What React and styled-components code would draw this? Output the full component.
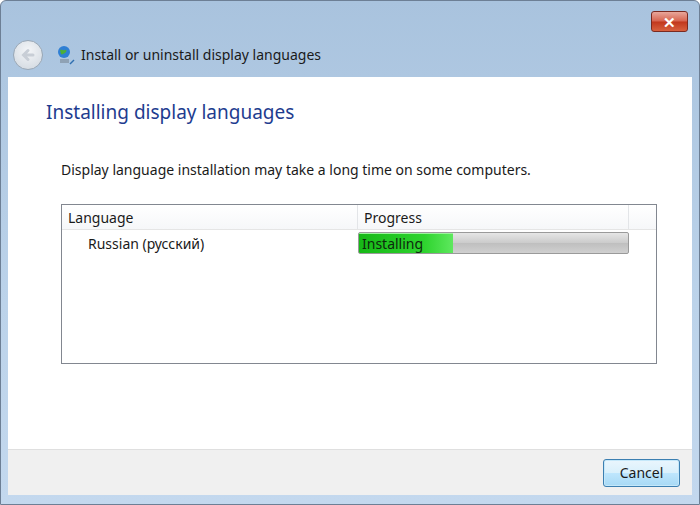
import styled, { createGlobalStyle } from "styled-components";

const Global = createGlobalStyle`
  html, body { margin: 0; padding: 0; }
  body { font-family: "Noto Sans", "Open Sans", sans-serif; }
`;

const Frame = styled.div`
  width: 700px;
  height: 505px;
  box-sizing: border-box;
  background: linear-gradient(180deg, #a9c3de 0%, #bcd3ea 60%, #c3d8ee 100%);
  border: 1px solid #6d7f95;
  border-radius: 6px 6px 0 0;
  display: flex;
  flex-direction: column;
  padding: 0 7px 9px 7px;
  overflow: hidden;
`;

const TitleBar = styled.div`
  height: 33px;
  display: flex;
  justify-content: flex-end;
  align-items: flex-start;
  padding-top: 10px;
  box-sizing: border-box;
`;

const CloseBtn = styled.div`
  width: 37px;
  height: 21px;
  border-radius: 3px;
  border: 1px solid #7a2a20;
  background: linear-gradient(180deg, #e8a79b 0%, #d7644f 48%, #c1371d 52%, #d8613f 100%);
  display: flex;
  align-items: center;
  justify-content: center;
  color: white;
  font-weight: 700;
  font-size: 15px;
  box-sizing: border-box;
  margin-right: 4px;
`;

const NavBar = styled.div`
  height: 41px;
  display: flex;
  align-items: center;
  gap: 5px;
  padding-left: 5px;
  padding-bottom: 2px;
  font-size: 14px;
  color: #1a1a1a;
`;

const BackBtn = styled.div`
  width: 28px;
  height: 28px;
  border-radius: 50%;
  border: 1px solid #9aa8b6;
  background: radial-gradient(circle at 50% 35%, #f4f6f8, #cfd6de);
  display: flex;
  align-items: center;
  justify-content: center;
  margin-right: 8px;
`;

const Content = styled.div`
  flex: 1;
  background: #fff;
  padding: 22px 0 0 38px;
  display: flex;
  flex-direction: column;
`;

const Heading = styled.div`
  font-size: 19px;
  color: #1e3c8f;
  margin-bottom: 35px;
`;

const Body = styled.div`
  padding-left: 15px;
  font-size: 14px;
  color: #1a1a1a;
`;

const ListBox = styled.div`
  margin-top: 25px;
  width: 596px;
  height: 160px;
  border: 1px solid #828790;
  box-sizing: border-box;
`;

const HeaderRow = styled.div`
  display: grid;
  grid-template-columns: 296px 271px 1fr;
  height: 25px;
  border-bottom: 1px solid #e5e5e5;
  background: linear-gradient(180deg, #fff, #f6f7f9);
  box-sizing: border-box;
`;

const HeaderCell = styled.div`
  padding-left: 6px;
  border-right: 1px solid #e3e5e8;
  display: flex;
  align-items: center;
  font-size: 14px;
`;

const Row = styled.div`
  display: grid;
  grid-template-columns: 296px 271px;
  height: 26px;
  align-items: center;
`;

const LangCell = styled.div`
  padding-left: 26px;
  font-size: 14px;
`;

const Bar = styled.div`
  position: relative;
  height: 22px;
  border: 1px solid #9a9a9a;
  border-radius: 2px;
  background: linear-gradient(180deg, #e6e6e6, #cbcbcb 50%, #bfbfbf 51%, #d0d0d0);
  overflow: hidden;
  box-sizing: border-box;
`;

const Fill = styled.div`
  height: 100%;
  background: linear-gradient(90deg, #16b816, #2fd42f 70%, #5ee85e);
  box-shadow: inset 0 1px 0 #9cf39c;
`;

const BarText = styled.span`
  position: absolute;
  left: 3px;
  top: 1px;
  font-size: 14px;
  color: #0d2a0d;
`;

const Footer = styled.div`
  height: 45px;
  background: #f0f0f0;
  border-top: 1px solid #dfdfdf;
  display: flex;
  justify-content: flex-end;
  align-items: center;
  padding-right: 12px;
`;

const Button = styled.button`
  width: 77px;
  height: 28px;
  font-family: inherit;
  font-size: 14px;
  color: #1a1a1a;
  border: 1px solid #3c7fb1;
  border-radius: 3px;
  background: linear-gradient(180deg, #eaf6fd 0%, #d9f0fc 50%, #bee6fd 51%, #a7d9f5 100%);
  box-shadow: inset 0 0 0 1px #c5e8fa;
`;

export default function App() {
  const progress = 35;
  return (
    <>
      <Global />
      <Frame>
        <TitleBar>
          <CloseBtn>✕</CloseBtn>
        </TitleBar>
        <NavBar>
          <BackBtn>
            <svg width="16" height="16" viewBox="0 0 16 16">
              <path d="M13 8H4M8 3.5L3.5 8 8 12.5" stroke="#c8ced6" strokeWidth="3" fill="none" strokeLinecap="round" />
            </svg>
          </BackBtn>
          <svg width="20" height="20" viewBox="0 0 20 20">
            <circle cx="8" cy="7" r="6" fill="#2f7fd4" />
            <path d="M4 5c2-1 3 1 5 0s2 2 0 3-3 2-4 1" fill="#4caf3a" />
            <rect x="4" y="14" width="9" height="4" fill="#8fa2b5" />
            <path d="M14 19l4-4" stroke="#2f6fb0" strokeWidth="1.5" />
          </svg>
          <span>Install or uninstall display languages</span>
        </NavBar>
        <Content>
          <Heading>Installing display languages</Heading>
          <Body>
            Display language installation may take a long time on some computers.
            <ListBox>
              <HeaderRow>
                <HeaderCell>Language</HeaderCell>
                <HeaderCell>Progress</HeaderCell>
                <div />
              </HeaderRow>
              <Row>
                <LangCell>Russian (русский)</LangCell>
                <Bar>
                  <Fill style={{ width: `${progress}%` }} />
                  <BarText>Installing</BarText>
                </Bar>
              </Row>
            </ListBox>
          </Body>
        </Content>
        <Footer>
          <Button>Cancel</Button>
        </Footer>
      </Frame>
    </>
  );
}
